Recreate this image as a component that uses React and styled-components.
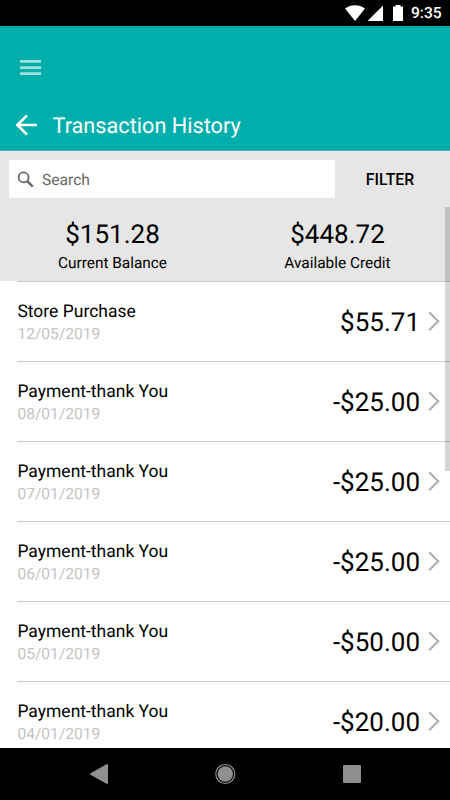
import React from "react";
import styled, { createGlobalStyle } from "styled-components";

const GlobalStyle = createGlobalStyle`
  * {
    box-sizing: border-box;
  }
  body {
    margin: 0;
    background: #fff;
    color: #000;
    font-family: Roboto, sans-serif;
    text-rendering: geometricPrecision;
  }
`;

const Screen = styled.div`
  position: relative;
  width: 450px;
  height: 800px;
  display: flex;
  flex-direction: column;
  overflow: hidden;
`;

const StatusBar = styled.div`
  height: 26px;
  flex: none;
  display: flex;
  align-items: center;
  justify-content: flex-end;
  padding-right: 8px;
  background: #000;
  color: #fff;
  svg {
    display: block;
  }
`;
const Clock = styled.span`
  width: 31px;
  margin-left: 7px;
  font-size: 15.6px;
  font-weight: 500;
  line-height: 26px;
  white-space: nowrap;
`;

const Header = styled.header`
  height: 125px;
  flex: none;
  background: #00afab;
  color: #fff;
  border-bottom: 1px solid #4db5b1;
`;
const MenuRow = styled.div`
  height: 82px;
  padding: 34px 0 0 20px;
`;
const TitleRow = styled.div`
  display: flex;
  align-items: center;
  height: 34px;
  padding-left: 15px;
`;
const Title = styled.h1`
  margin: 0 0 0 15.5px;
  padding-top: 3px;
  font-size: 21.7px;
  font-weight: 400;
  line-height: 34px;
`;

const Toolbar = styled.div`
  height: 55px;
  flex: none;
  display: flex;
  align-items: flex-start;
  padding: 9px 0 0 9px;
  background: #e6e6e6;
`;
const SearchBox = styled.div`
  width: 326px;
  height: 38px;
  display: flex;
  align-items: center;
  padding-left: 8px;
  background: #fff;
  color: #666;
  font-size: 15.6px;
  line-height: 38px;
  svg {
    margin-right: 8px;
  }
  span {
    padding-top: 1px;
  }
`;
const FilterButton = styled.button`
  flex: 1;
  height: 39px;
  padding: 1px 5px 0 0;
  border: 0;
  background: none;
  color: #000;
  font: 500 15.8px/38px Roboto, sans-serif;
`;

const Summary = styled.section`
  height: 75px;
  flex: none;
  display: flex;
  background: #e6e6e6;
`;
const Balance = styled.div`
  flex: 1;
  padding-top: 13px;
  text-align: center;
`;
const BalanceValue = styled.div`
  font-size: 26px;
  line-height: 32px;
`;
const BalanceLabel = styled.div`
  font-size: 15.4px;
  line-height: 24px;
`;

const List = styled.ul`
  height: 467px;
  flex: none;
  margin: 0;
  padding: 0 0 0 17px;
  list-style: none;
  overflow: hidden;
`;
const Row = styled.li`
  height: 80px;
  display: flex;
  align-items: center;
  justify-content: space-between;
  padding: 2px 10px 0 0.4px;
  border-top: 1px solid #c8c8c8;
`;
const Name = styled.div`
  padding-top: 1px;
  font-size: 17.5px;
  line-height: 22px;
`;
const Day = styled.div`
  font-size: 15.6px;
  line-height: 22px;
  color: #c4c4c4;
`;
const Amount = styled.div`
  display: flex;
  align-items: center;
  font-size: 26px;
  line-height: 32px;
  svg {
    margin: 0 0 4px 8px;
  }
`;

const NavBar = styled.nav`
  height: 52px;
  flex: none;
  background: #000;
  svg {
    display: block;
  }
`;
const ScrollThumb = styled.div`
  position: absolute;
  top: 207px;
  right: 0;
  width: 5px;
  height: 264px;
  background: rgba(0, 0, 0, 0.16);
`;

const transactions = [
  { name: "Store Purchase", day: "12/05/2019", amount: "$55.71" },
  { name: "Payment-thank You", day: "08/01/2019", amount: "-$25.00" },
  { name: "Payment-thank You", day: "07/01/2019", amount: "-$25.00" },
  { name: "Payment-thank You", day: "06/01/2019", amount: "-$25.00" },
  { name: "Payment-thank You", day: "05/01/2019", amount: "-$50.00" },
  { name: "Payment-thank You", day: "04/01/2019", amount: "-$20.00" },
];

const StatusIcons = () => (
  <svg width="60" height="26" viewBox="0 0 60 26" fill="#fff">
    <path d="M1 8.500C6.500 4 15.500 4 21 8.500L11 21Z" />
    <path d="M39 5.500V21H23.500Z" />
    <path d="M49 6.500H51.500V5H56.500V6.500H59V21H49Z" />
  </svg>
);

const MenuIcon = () => (
  <svg width="21" height="15" viewBox="0 0 21 15" fill="#a6e0de">
    <path d="M0 0H21V2.700H0ZM0 6.200H21V8.900H0ZM0 12.300H21V15H0Z" />
  </svg>
);

const BackIcon = () => (
  <svg width="22" height="22" viewBox="0 0 22 22" fill="none" stroke="#fff" strokeWidth="2.600">
    <path d="M22 11H2.500M12 1.300L2.300 11L12 20.700" />
  </svg>
);

const SearchIcon = () => (
  <svg width="17" height="17" viewBox="0 0 17 17" fill="none" stroke="#666" strokeWidth="1.800">
    <circle cx="6.600" cy="6.400" r="5" />
    <path d="M10.300 10.100L15.800 15.600" strokeWidth="2.200" />
  </svg>
);

const Chevron = () => (
  <svg width="12" height="20" viewBox="0 0 12 20" fill="none" stroke="#b0b0b0" strokeWidth="2.200">
    <path d="M1.200 1.200L10.200 10.200L1.200 19.200" />
  </svg>
);

const NavIcons = () => (
  <svg width="450" height="52" viewBox="0 0 450 52" fill="#909090">
    <path d="M91 26L107 17V35Z" stroke="#909090" strokeWidth="2" strokeLinejoin="round" />
    <circle cx="225.300" cy="26" r="7.700" />
    <circle cx="225.300" cy="26" r="9.500" fill="none" stroke="#909090" strokeWidth="1.200" />
    <rect x="343" y="17" width="18" height="18" rx="1" />
  </svg>
);

const App = () => {
  return (
    <>
      <GlobalStyle />
      <Screen>
        <StatusBar>
          <StatusIcons />
          <Clock>9:35</Clock>
        </StatusBar>
        <Header>
          <MenuRow>
            <MenuIcon />
          </MenuRow>
          <TitleRow>
            <BackIcon />
            <Title>Transaction History</Title>
          </TitleRow>
        </Header>
        <Toolbar>
          <SearchBox>
            <SearchIcon />
            <span>Search</span>
          </SearchBox>
          <FilterButton>FILTER</FilterButton>
        </Toolbar>
        <Summary>
          <Balance>
            <BalanceValue>$151.28</BalanceValue>
            <BalanceLabel>Current Balance</BalanceLabel>
          </Balance>
          <Balance>
            <BalanceValue>$448.72</BalanceValue>
            <BalanceLabel>Available Credit</BalanceLabel>
          </Balance>
        </Summary>
        <List>
          {transactions.map((item) => (
            <Row key={item.day}>
              <div>
                <Name>{item.name}</Name>
                <Day>{item.day}</Day>
              </div>
              <Amount>
                <span>{item.amount}</span>
                <Chevron />
              </Amount>
            </Row>
          ))}
        </List>
        <NavBar>
          <NavIcons />
        </NavBar>
        <ScrollThumb />
      </Screen>
    </>
  );
};

export default App;
